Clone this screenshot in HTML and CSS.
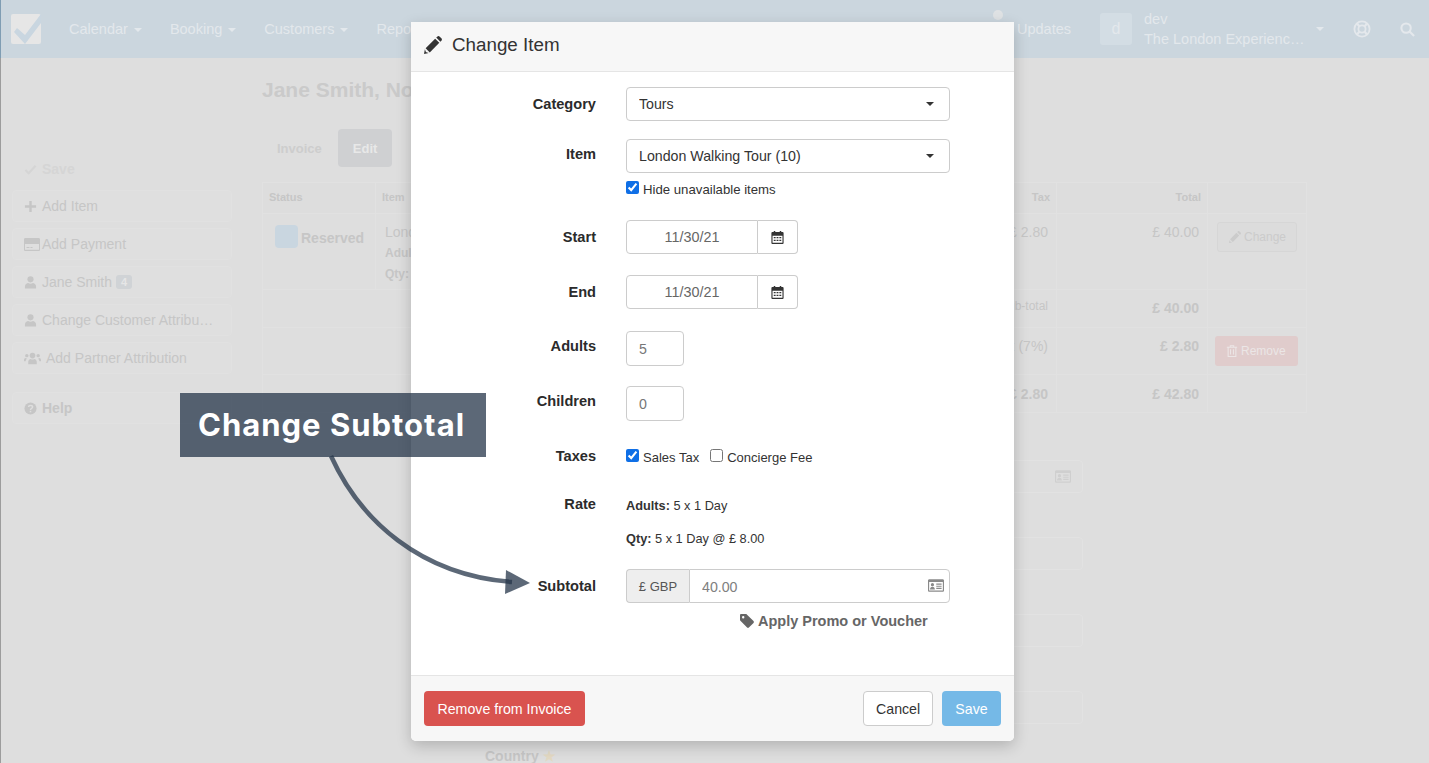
FILE: index.html
```html
<!DOCTYPE html>
<html lang="en">

<head>
    <meta charset="UTF-8">
    <meta name="viewport" content="width=device-width, initial-scale=1.0">
    <title>Change Item</title>
    <link rel="stylesheet" href="styles.css">
</head>

<body>
    <svg class="icon-defs" width="0" height="0">
        <symbol id="i-pencil" viewBox="0 0 20 20">
            <path d="M1 14.800L0 20l5.200-1L2.600 18l-.6-.6-1-2.600z" />
            <path d="M1.800 13.600L12.400 3 17 7.600 6.400 18.200z" />
            <path d="M13.600 1.800l1.100-1.100c.8-.8 2-.8 2.800 0l1.800 1.800c.8.800.8 2 0 2.800l-1.100 1.100z" />
        </symbol>
        <symbol id="i-calendar" viewBox="0 0 16 16">
            <path d="M4 1h1.600v2H4zM10.400 1H12v2h-1.600z" />
            <path fill-rule="evenodd" d="M2.500 2.200h11c.6 0 1 .4 1 1v10.600c0 .6-.4 1-1 1h-11c-.6 0-1-.4-1-1V3.200c0-.6.4-1 1-1zm.2 4v7.400h10.600V6.200H2.700z" />
            <path d="M4 7.500h2v1.400H4zM7 7.500h2v1.400H7zM10 7.500h2v1.400h-2zM4 10.300h2v1.400H4zM7 10.300h2v1.400H7zM10 10.300h2v1.400h-2z" />
        </symbol>
        <symbol id="i-card" viewBox="0 0 18 14">
            <path fill-rule="evenodd" d="M1.500 0h15c.8 0 1.500.7 1.500 1.500v11c0 .8-.7 1.500-1.500 1.500h-15C.7 14 0 13.300 0 12.500v-11C0 .7.700 0 1.500 0zm-.2 3.200v9.300h15.400V3.200H1.300z" />
            <path d="M5 4.300a1.800 1.800 0 1 1 0 3.600 1.800 1.800 0 0 1 0-3.600zM2.300 11.400c0-1.800 1.100-3 2.700-3s2.700 1.200 2.700 3H2.300zM9.300 4.800h6v1.300h-6zM9.300 7.200h6v1.300h-6zM9.300 9.600h6v1.300h-6z" />
        </symbol>
        <symbol id="i-user" viewBox="0 0 14 14">
            <circle cx="7" cy="3.600" r="3.300" />
            <path d="M1 13.500v-2.200C1 9 3 7.800 4.500 7.600c.7.500 1.600.8 2.500.8s1.800-.3 2.500-.8C11 7.800 13 9 13 11.300v2.200z" />
        </symbol>
        <symbol id="i-users" viewBox="0 0 18 13">
            <circle cx="9" cy="3.400" r="3" />
            <circle cx="3" cy="3.500" r="1.800" />
            <circle cx="15" cy="3.500" r="1.800" />
            <path d="M4.500 12.600V10c0-1.800 1.500-3 2.500-3 .6.400 1.300.6 2 .6s1.400-.2 2-.6c1 0 2.500 1.200 2.500 3v2.600zM0 9.500V8c0-1 .8-2 1.700-2 .5.400 1 .5 1.500.5-.8.800-1.400 1.800-1.500 3zM18 9.500V8c0-1-.8-2-1.700-2-.5.400-1 .5-1.500.5.800.8 1.400 1.800 1.500 3z" />
        </symbol>
    </svg>

    <div class="page">
        <!-- Barra de navegacao -->
        <header class="navbar">
            <svg class="logo" viewBox="0 0 30 30">
                <rect width="30" height="30" rx="2" fill="#e6e6e6" />
                <path d="M6 14l8 7L30 0v9L14 30 3 18z" fill="#c9d6e0" />
            </svg>
            <nav class="nav-links">
                <a class="nav-link">Calendar <i class="caret"></i></a>
                <a class="nav-link">Booking <i class="caret"></i></a>
                <a class="nav-link">Customers <i class="caret"></i></a>
                <a class="nav-link">Reports <i class="caret"></i></a>
            </nav>
            <div class="nav-right">
                <span class="updates">
                    <i class="update-dot"></i>
                    Updates
                </span>
                <span class="avatar">d</span>
                <div class="account">
                    <div>dev</div>
                    <div>The London Experienc…</div>
                </div>
                <i class="caret account-caret"></i>
                <svg class="nav-icon lifesaver" viewBox="0 0 18 18" fill="none" stroke="#e4e8ec">
                    <circle cx="9" cy="9" r="7.600" stroke-width="1.800" />
                    <circle cx="9" cy="9" r="3.600" stroke-width="1.800" />
                    <path d="M4 3.500l2.500 3M14 3.500l-2.500 3M4 14.500l2.500-3M14 14.500l-2.500-3" stroke-width="2.200" />
                </svg>
                <svg class="nav-icon search" viewBox="0 0 16 16" fill="none" stroke="#e4e8ec" stroke-width="2.200">
                    <circle cx="6.500" cy="6.500" r="5" />
                    <path d="M10.200 10.200L15 15" />
                </svg>
            </div>
        </header>

        <div class="content">
            <aside class="sidebar">
                <div class="save-link">
                    <svg class="side-icon" viewBox="0 0 14 14" fill="none" stroke="#d5d5d5" stroke-width="2.400">
                        <path d="M1.500 7.500l3.500 3.500 7.500-8" />
                    </svg>
                    Save
                </div>
                <div class="side-item">
                    <svg class="side-icon" viewBox="0 0 14 14" fill="#c6c6c6">
                        <path d="M5.700 1h2.600v4.700H13v2.600H8.300V13H5.700V8.300H1V5.700h4.700z" />
                    </svg>
                    Add Item
                </div>
                <div class="side-item">
                    <svg class="side-icon card-icon" viewBox="0 0 16 13" fill="#c6c6c6">
                        <path fill-rule="evenodd" d="M1.300 0h13.400c.7 0 1.300.6 1.300 1.300v10.400c0 .7-.6 1.300-1.300 1.300H1.300C.6 13 0 12.400 0 11.700V1.300C0 .6.600 0 1.300 0zM1 6v5.800h14V6H1zM2.500 9h3v1h-3zM6.500 9h2v1h-2z" />
                    </svg>Add Payment
                </div>
                <div class="side-item">
                    <svg class="side-icon"><use href="#i-user" fill="#c6c6c6" /></svg>
                    Jane Smith <span class="badge">4</span>
                </div>
                <div class="side-item">
                    <svg class="side-icon"><use href="#i-user" fill="#c6c6c6" /></svg>
                    Change Customer Attribu…
                </div>
                <div class="side-item">
                    <svg class="side-icon users-icon"><use href="#i-users" fill="#c6c6c6" /></svg>
                    Add Partner Attribution
                </div>
                <div class="side-item help-item">
                    <svg class="side-icon" viewBox="0 0 14 14">
                        <circle cx="7" cy="7" r="6.500" fill="#c6c6c6" />
                        <path d="M4.800 5.400C5 3.200 9.300 3.200 9.300 5.500c0 1.500-2.300 1.400-2.300 3" fill="none" stroke="#dedede" stroke-width="1.500" />
                        <rect x="6.200" y="9.500" width="1.600" height="1.600" fill="#dedede" />
                    </svg>
                    Help
                </div>
            </aside>

            <main class="main">
                <h1>Jane Smith, Nov 30, 2021</h1>
                <div class="tabs">
                    <a class="tab">Invoice</a>
                    <a class="tab tab-active">Edit</a>
                </div>

                <table class="invoice">
                    <colgroup>
                        <col class="col-status">
                        <col class="col-item">
                        <col class="col-tax">
                        <col class="col-total">
                        <col class="col-action">
                    </colgroup>
                    <thead>
                        <tr>
                            <th>Status</th>
                            <th>Item</th>
                            <th class="num">Tax</th>
                            <th class="num">Total</th>
                            <th></th>
                        </tr>
                    </thead>
                    <tbody>
                        <tr class="row-item">
                            <td class="status-cell"><span class="status-dot"></span><b class="status-text">Reserved</b></td>
                            <td class="item-cell">
                                London Walking Tour<br>
                                <small>Adults: 5</small><br>
                                <small>Qty: 5</small>
                            </td>
                            <td class="num">£ 2.80</td>
                            <td class="num">£ 40.00</td>
                            <td class="action-cell">
                                <span class="change-btn">
                                    <svg class="btn-icon"><use href="#i-pencil" fill="#cbcbcb" /></svg>
                                    Change
                                </span>
                            </td>
                        </tr>
                        <tr class="row-sub">
                            <td colspan="3" class="num small-label">Sub-total</td>
                            <td class="num"><b>£ 40.00</b></td>
                            <td></td>
                        </tr>
                        <tr class="row-tax">
                            <td colspan="3" class="num">Sales Tax (7%)</td>
                            <td class="num"><b>£ 2.80</b></td>
                            <td class="action-cell">
                                <span class="remove-btn">
                                    <svg class="btn-icon" viewBox="0 0 12 14" fill="none" stroke="#ebe6e6" stroke-width="1.200">
                                        <path d="M0 2.500h12M4 2.500V.8h4v1.700M1.500 2.500v10.800h9V2.500M4.300 5v6M7.700 5v6" />
                                    </svg>
                                    Remove
                                </span>
                            </td>
                        </tr>
                        <tr class="row-total">
                            <td colspan="3" class="num"><b>£ 2.80</b></td>
                            <td class="num"><b>£ 42.80</b></td>
                            <td></td>
                        </tr>
                    </tbody>
                </table>

                <!-- Formulario atras do modal -->
                <div class="customer-form">
                    <div class="ghost-input">
                        <svg class="ghost-card"><use href="#i-card" fill="#cfcfcf" /></svg>
                    </div>
                    <div class="ghost-input"></div>
                    <div class="ghost-input"></div>
                    <div class="ghost-input"></div>
                    <div class="ghost-label">Country <span class="star">★</span></div>
                </div>
            </main>
        </div>
    </div>

    <!-- Modal -->
    <div class="modal">
        <div class="modal-header">
            <svg class="header-icon"><use href="#i-pencil" fill="#333" /></svg>
            <h2>Change Item</h2>
        </div>

        <form class="modal-body">
            <div class="field field-category">
                <label for="category">Category</label>
                <div class="select-wrap">
                    <select id="category">
                        <option>Tours</option>
                    </select>
                </div>
            </div>

            <div class="field field-item">
                <label for="item" class="label-high">Item</label>
                <div>
                    <div class="select-wrap">
                        <select id="item">
                            <option>London Walking Tour (10)</option>
                        </select>
                    </div>
                    <label class="check hide-check"><input type="checkbox" checked> Hide unavailable items</label>
                </div>
            </div>

            <div class="field field-start">
                <label for="start">Start</label>
                <div class="date-group">
                    <input type="text" id="start" value="11/30/21">
                    <span class="date-btn"><svg class="cal-icon"><use href="#i-calendar" fill="#333" /></svg></span>
                </div>
            </div>

            <div class="field field-end">
                <label for="end">End</label>
                <div class="date-group">
                    <input type="text" id="end" value="11/30/21">
                    <span class="date-btn"><svg class="cal-icon"><use href="#i-calendar" fill="#333" /></svg></span>
                </div>
            </div>

            <div class="field field-adults">
                <label for="adults" class="label-high">Adults</label>
                <input type="text" id="adults" class="qty-input" value="5">
            </div>

            <div class="field field-children">
                <label for="children" class="label-high">Children</label>
                <input type="text" id="children" class="qty-input" value="0">
            </div>

            <div class="field field-taxes">
                <label class="label-plain">Taxes</label>
                <div class="tax-checks">
                    <label class="check"><input type="checkbox" checked> Sales Tax</label>
                    <label class="check"><input type="checkbox"> Concierge Fee</label>
                </div>
            </div>

            <div class="field field-rate">
                <label class="label-plain">Rate</label>
                <div class="rate-lines">
                    <p><b>Adults:</b> 5 x 1 Day</p>
                    <p><b>Qty:</b> 5 x 1 Day @ £ 8.00</p>
                </div>
            </div>

            <div class="field field-subtotal">
                <label for="subtotal">Subtotal</label>
                <div>
                    <div class="money-group">
                        <span class="addon">£ GBP</span>
                        <input type="text" id="subtotal" value="40.00">
                        <svg class="money-card"><use href="#i-card" fill="#8a8a8a" /></svg>
                    </div>
                    <a class="promo">
                        <svg class="tag-icon" viewBox="0 0 14 14" fill="#666">
                            <path fill-rule="evenodd" d="M0 1.200C0 .5.500 0 1.200 0h4.600c.4 0 .8.200 1 .4l6.700 6.700c.5.500.5 1.300 0 1.800l-4.600 4.600c-.5.500-1.300.5-1.800 0L.4 6.800C.1 6.500 0 6.200 0 5.800V1.200zm3.200.8a1.200 1.200 0 1 0 0 2.400 1.200 1.200 0 0 0 0-2.400z" />
                        </svg>
                        Apply Promo or Voucher
                    </a>
                </div>
            </div>
        </form>

        <div class="modal-footer">
            <button type="button" class="btn btn-remove">Remove from Invoice</button>
            <div class="footer-right">
                <button type="button" class="btn btn-cancel">Cancel</button>
                <button type="button" class="btn btn-save">Save</button>
            </div>
        </div>
    </div>

    <!-- Anotacao por cima do modal -->
    <div class="callout">Change Subtotal</div>
    <svg class="callout-arrow" viewBox="0 0 260 200">
        <path d="M4 1C33 65 93 120 185 127" fill="none" stroke="rgba(38, 54, 74, 0.75)" stroke-width="4.500" />
        <path d="M179 115L203 128 178 139z" fill="rgba(38, 54, 74, 0.75)" />
    </svg>
</body>

</html>
```

FILE: styles.css
```css
* {
    box-sizing: border-box;
}

html,
body {
    height: 763px;
    margin: 0;
    overflow: hidden;
}

body {
    font-family: "Liberation Sans", Arial, sans-serif;
    font-size: 14px;
    color: #333;
    background-color: #dedede;
}

.icon-defs {
    position: absolute;
}

.page {
    height: 763px;
    overflow: hidden;
}

/* Navbar */
.navbar {
    display: flex;
    align-items: center;
    height: 58px;
    padding: 0 0 0 10px;
    border-left: 1px solid #7f9db3;
    background-color: #cbd6de;
}

.logo {
    width: 30px;
    height: 30px;
    margin-right: 28px;
}

.nav-links {
    display: flex;
    gap: 28px;
}

.nav-link {
    color: #e3e8ec;
    font-size: 14.5px;
    white-space: nowrap;
}

.caret {
    display: inline-block;
    margin-left: 2px;
    vertical-align: middle;
    border-top: 4px solid #e3e8ec;
    border-left: 4px solid transparent;
    border-right: 4px solid transparent;
}

.nav-right {
    display: flex;
    align-items: center;
    margin-left: auto;
    color: #e3e8ec;
    font-size: 14.5px;
}

.updates {
    position: relative;
    margin-right: 29px;
}

.update-dot {
    position: absolute;
    left: -24px;
    top: -11px;
    width: 10px;
    height: 10px;
    border-radius: 50%;
    background-color: #dfe2e4;
}

.avatar {
    display: flex;
    align-items: center;
    justify-content: center;
    width: 32px;
    height: 32px;
    margin-right: 12px;
    border-radius: 3px;
    background-color: #d3dde4;
    font-size: 16px;
}

.account {
    width: 172px;
    line-height: 20px;
}

.account-caret {
    margin-left: 0;
}

.nav-icon {
    display: block;
}

.lifesaver {
    width: 18px;
    height: 18px;
    margin-left: 29px;
}

.search {
    width: 15px;
    height: 15px;
    margin-left: 29px;
    margin-right: 14px;
}

/* Sidebar */
.content {
    display: flex;
    height: 705px;
    border-left: 1px solid #9c9c9c;
}

.sidebar {
    flex: none;
    width: 220px;
    margin-left: 11px;
    padding-top: 101px;
    color: #c6c6c6;
}

.save-link {
    display: flex;
    align-items: center;
    height: 20px;
    margin-left: 12px;
    margin-bottom: 11px;
    color: #d5d5d5;
    font-weight: bold;
}

.side-item {
    display: flex;
    align-items: center;
    height: 32px;
    margin-bottom: 6px;
    padding: 0 11px;
    border: 1px solid #e1e1e1;
    border-radius: 4px;
    background-color: #dfdfdf;
    white-space: nowrap;
}

.side-icon {
    flex: none;
    width: 13px;
    height: 13px;
    margin-right: 5px;
}

.card-icon {
    width: 16px;
    margin-right: 2px;
}

.users-icon {
    width: 17px;
    margin-right: 5px;
}

.help-item {
    margin-top: 18px;
    font-weight: bold;
}

.badge {
    margin-left: 4px;
    padding: 1px 5px;
    border-radius: 3px;
    background-color: #d0d3d6;
    color: #e6e6e6;
    font-size: 11px;
    font-weight: bold;
}

/* Conteudo principal */
.main {
    flex: none;
    width: 1044px;
    margin-left: 30px;
}

h1 {
    height: 24px;
    margin: 20px 0 0;
    color: #cacaca;
    font-size: 21px;
    line-height: 24px;
    white-space: nowrap;
}

.tabs {
    display: flex;
    gap: 1px;
    margin-top: 27px;
}

.tab {
    height: 38px;
    padding: 0 15px;
    border-radius: 4px;
    color: #cdcdcd;
    font-size: 13px;
    font-weight: bold;
    line-height: 39px;
}

.tab-active {
    background-color: #cfd0d2;
    color: #e8e8e8;
}

.invoice {
    width: 1044px;
    margin-top: 15px;
    table-layout: fixed;
    border-collapse: collapse;
    color: #c6c6c6;
}

.col-status {
    width: 113px;
}

.col-item {
    width: 615px;
}

.col-tax {
    width: 66px;
}

.col-total {
    width: 151px;
}

.col-action {
    width: 99px;
}

.invoice th,
.invoice td {
    padding: 10px 8px 0;
    border: 1px solid #e1e1e1;
    vertical-align: top;
    text-align: left;
}

.invoice th {
    height: 31px;
    padding: 8px 6px;
    font-size: 11px;
    background-color: #dddddd;
}

.invoice .num {
    text-align: right;
}

.row-item td {
    height: 76px;
    padding-top: 8px;
    line-height: 20px;
}

.invoice .status-cell {
    padding: 11px 0 0 12px;
    white-space: nowrap;
}

.invoice .item-cell {
    padding-left: 9px;
    white-space: nowrap;
}

.row-sub td {
    height: 38px;
}

.row-tax td {
    height: 47px;
}

.row-total td {
    height: 38px;
    padding-top: 11px;
}

.status-dot {
    display: inline-block;
    width: 23px;
    height: 23px;
    margin-right: 3px;
    border-radius: 4px;
    background-color: #c9d6e0;
    vertical-align: middle;
}

.status-text {
    position: relative;
    top: 1px;
    vertical-align: middle;
}

.item-cell small {
    font-size: 12px;
    font-weight: bold;
}

.invoice .small-label {
    padding-top: 9px;
    font-size: 12px;
}

.invoice .action-cell {
    padding: 8px 9px 0;
}

.change-btn,
.remove-btn {
    display: flex;
    align-items: center;
    gap: 3px;
    height: 30px;
    padding-left: 11px;
    border-radius: 3px;
    font-size: 12px;
    white-space: nowrap;
}

.change-btn {
    border: 1px solid #d6d6d6;
    background-color: #dcdcdc;
    color: #cbcbcb;
}

.remove-btn {
    margin: 0 -1px 0 -2px;
    background-color: #e0cccc;
    color: #ebe6e6;
}

.btn-icon {
    width: 12px;
    height: 12px;
}

.customer-form {
    width: 598px;
    margin-left: 223px;
    margin-top: 47px;
}

.ghost-input {
    position: relative;
    height: 33px;
    margin-bottom: 44px;
    border: 1px solid #e2e2e2;
    border-radius: 4px;
}

.ghost-card {
    position: absolute;
    right: 11px;
    top: 9px;
    width: 16px;
    height: 13px;
}

.ghost-label {
    margin-top: -19px;
    color: #c6c6c6;
    font-size: 14px;
    font-weight: bold;
    line-height: 14px;
}

.star {
    color: #e3d9c3;
}

/* Modal */
.modal {
    position: absolute;
    left: 411px;
    top: 22px;
    display: flex;
    flex-direction: column;
    width: 603px;
    height: 719px;
    border-radius: 0 0 5px 5px;
    background-color: white;
    box-shadow: 0 5px 15px rgba(0, 0, 0, 0.2);
}

.modal-header {
    display: flex;
    align-items: center;
    flex: none;
    height: 50px;
    padding: 0 0 3px 13px;
    border-bottom: 1px solid #e5e5e5;
    background-color: #f7f7f7;
}

.header-icon {
    width: 18px;
    height: 18px;
    margin-right: 10px;
}

h2 {
    margin: 0;
    color: #333;
    font-size: 18.8px;
    font-weight: normal;
}

.modal-body {
    flex: 1;
    padding-top: 15px;
}

.field {
    display: grid;
    grid-template-columns: 185px 324px;
    column-gap: 30px;
    align-items: start;
}

.field>label {
    padding-top: 7px;
    line-height: 20px;
    font-size: 14.6px;
    font-weight: bold;
    text-align: right;
    color: #2b2b2b;
}

.field>.label-high {
    padding-top: 5px;
}

.field>.label-plain {
    padding-top: 0;
}

.field-category {
    margin-bottom: 18px;
}

.field-item {
    margin-bottom: 23px;
}

.field-start {
    margin-bottom: 21px;
}

.field-end {
    margin-bottom: 22px;
}

.field-adults {
    margin-bottom: 20px;
}

.field-children {
    margin-bottom: 25px;
}

.field-taxes {
    height: 20px;
    margin-bottom: 28px;
}

.field-rate {
    height: 75px;
}

select,
input[type="text"] {
    height: 34px;
    padding: 0 12px;
    border: 1px solid #ccc;
    border-radius: 4px;
    background-color: white;
    color: #666;
    font-family: inherit;
    font-size: 14.2px;
    outline: none;
}

select {
    appearance: none;
    width: 100%;
    color: #333;
}

.select-wrap {
    position: relative;
}

.select-wrap::after {
    content: "";
    position: absolute;
    right: 16px;
    top: 15px;
    border-top: 4px solid #333;
    border-left: 4px solid transparent;
    border-right: 4px solid transparent;
}

.check {
    display: inline-flex;
    align-items: center;
    color: #333;
    font-size: 13.2px;
}

.check input {
    width: 13px;
    height: 13px;
    margin: 0 4px 3px 0;
    accent-color: #0f6fe6;
}

.hide-check {
    margin-top: 8px;
    height: 16px;
}

.date-group {
    display: flex;
    width: 172px;
    height: 34px;
}

.date-group input {
    width: 132px;
    border-radius: 4px 0 0 4px;
    font-size: 14.4px;
    text-align: center;
}

.date-btn {
    display: flex;
    align-items: center;
    justify-content: center;
    width: 40px;
    border: 1px solid #ccc;
    border-left: none;
    border-radius: 0 4px 4px 0;
}

.cal-icon {
    width: 15px;
    height: 15px;
}

.qty-input {
    width: 58px;
    height: 35px !important;
    color: #777 !important;
}

.tax-checks {
    display: flex;
    gap: 11px;
    padding-top: 3px;
}

.tax-checks .check {
    font-size: 13px;
}

.rate-lines {
    padding-top: 2px;
    font-size: 12.75px;
    color: #333;
}

.rate-lines p {
    margin: 2px 0 18px;
    line-height: 15px;
}

.money-group {
    position: relative;
    display: flex;
    height: 34px;
}

.addon {
    display: flex;
    align-items: center;
    justify-content: center;
    flex: none;
    width: 63px;
    border: 1px solid #ccc;
    border-right: none;
    border-radius: 4px 0 0 4px;
    background-color: #eee;
    color: #555;
    font-size: 13px;
}

.money-group input {
    flex: 1;
    min-width: 0;
    padding-top: 1px;
    border-radius: 0 4px 4px 0;
    color: #808080;
}

.money-card {
    position: absolute;
    right: 6px;
    top: 10px;
    width: 16px;
    height: 13px;
}

.promo {
    display: flex;
    align-items: center;
    gap: 4px;
    margin: 10px 0 0 114px;
    color: #666;
    font-size: 14.5px;
    font-weight: bold;
    white-space: nowrap;
}

.tag-icon {
    width: 14px;
    height: 14px;
}

.modal-footer {
    display: flex;
    align-items: center;
    justify-content: space-between;
    flex: none;
    height: 66px;
    padding: 0 13px;
    border-top: 1px solid #e5e5e5;
    border-radius: 0 0 5px 5px;
    background-color: #f7f7f7;
}

.footer-right {
    display: flex;
    gap: 9px;
}

.btn {
    height: 35px;
    padding: 0 12px;
    border: 1px solid transparent;
    border-radius: 4px;
    color: white;
    font-family: inherit;
    font-size: 14.2px;
}

.btn-remove {
    width: 161px;
    background-color: #d9534f;
}

.btn-cancel {
    width: 70px;
    border-color: #ccc;
    background-color: white;
    color: #333;
}

.btn-save {
    width: 59px;
    background-color: #75b9e7;
}

/* Anotacao */
.callout {
    position: absolute;
    left: 180px;
    top: 393px;
    width: 306px;
    height: 64px;
    padding-left: 18px;
    background-color: rgba(38, 54, 74, 0.75);
    color: white;
    font-family: Inter, "Open Sans", sans-serif;
    font-size: 31px;
    font-weight: 700;
    letter-spacing: 1px;
    line-height: 64px;
    white-space: nowrap;
}

.callout-arrow {
    position: absolute;
    left: 327px;
    top: 455px;
    width: 260px;
    height: 200px;
}
```
